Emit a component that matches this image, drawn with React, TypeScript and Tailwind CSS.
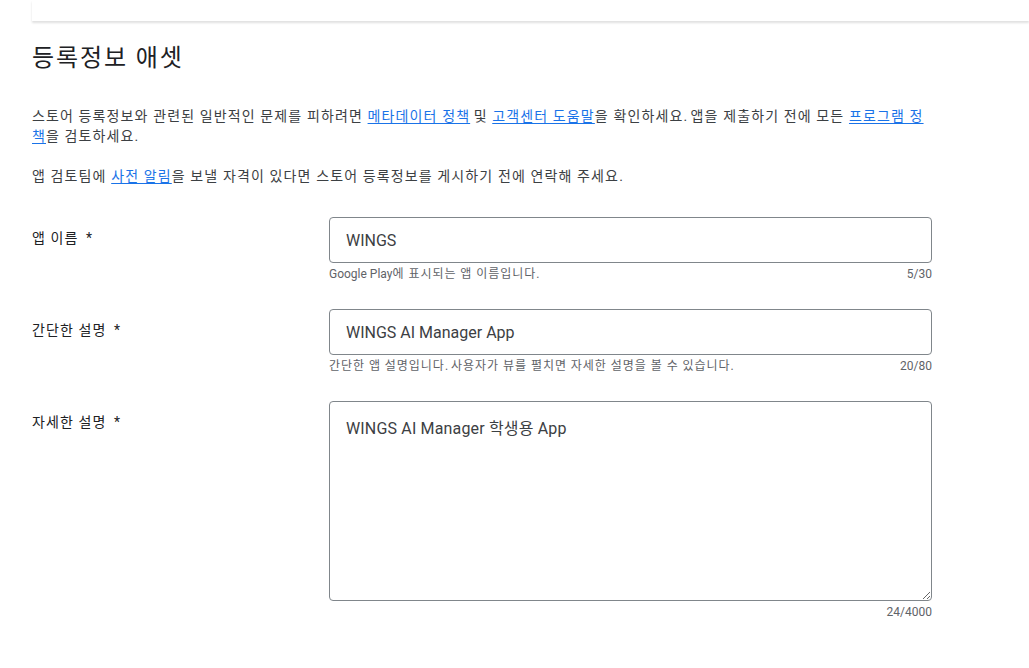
import type { ReactNode } from 'react'

const font = { fontFamily: 'Roboto, "Noto Sans CJK KR", sans-serif' }

// 한글 구간만 자간을 살짝 넓힘 (레퍼런스 폰트가 더 넓음)
function K({ children }: { children: string }) {
  const parts = children.split(/([\uac00-\ud7a3\u3131-\u318e][\uac00-\ud7a3\u3131-\u318e ]*)/)
  return (
    <>
      {parts.map((p, i) =>
        /[\uac00-\ud7a3]/.test(p) ? (
          <span key={i} className="tracking-[0.08em]">{p}</span>
        ) : (
          p
        )
      )}
    </>
  )
}

function Link({ children }: { children: ReactNode }) {
  return (
    <a href="#" className="text-[#1a73e8] underline underline-offset-2">
      {children}
    </a>
  )
}

function Field({ label, value, helper, count, multiline = false }: {
  label: string
  value: string
  helper?: string
  count: string
  multiline?: boolean
}) {
  return (
    <div className="grid grid-cols-[297px_603px] mb-[27px]">
      <div className="pt-[11px] text-sm leading-5 text-[#202124]">
        <K>{label}</K> <span className="ml-1">*</span>
      </div>
      <div>
        {multiline ? (
          <textarea
            defaultValue={value}
            className="block w-full h-[200px] rounded border border-[#80868b] px-4 pt-[15px] text-base leading-6 text-[#3c4043] outline-none tracking-[0.01em]"
            style={font}
          />
        ) : (
          <input
            defaultValue={value}
            className="block w-full h-[46px] rounded border border-[#80868b] px-4 text-base text-[#3c4043] outline-none"
            style={font}
          />
        )}
        <div className="mt-[3px] flex justify-between text-xs leading-4 text-[#5f6368]">
          <span>{helper && <K>{helper}</K>}</span>
          <span>{count}</span>
        </div>
      </div>
    </div>
  )
}

export default function App() {
  return (
    <div className="min-h-screen bg-white" style={font}>
      <div className="ml-8 h-[21px] bg-white shadow-[0_2px_2px_rgba(0,0,0,0.12)]" />
      <div className="pl-8 w-[932px]">
        <h1 className="mt-[21px] text-2xl leading-8 font-normal text-[#202124]">
          <K>등록정보 애셋</K>
        </h1>

        <p className="mt-8 text-sm leading-5 text-[#3c4043]">
          <K>스토어 등록정보와 관련된 일반적인 문제를 피하려면 </K>
          <Link><K>메타데이터 정책</K></Link> <K>및 </K>
          <Link><K>고객센터 도움말</K></Link>
          <K>을 확인하세요. 앱을 제출하기 전에 모든 </K>
          <Link><K>프로그램 정책</K></Link>
          <K>을 검토하세요.</K>
        </p>

        <p className="mt-5 text-sm leading-5 text-[#3c4043]">
          <K>앱 검토팀에 </K>
          <Link><K>사전 알림</K></Link>
          <K>을 보낼 자격이 있다면 스토어 등록정보를 게시하기 전에 연락해 주세요.</K>
        </p>

        <div className="mt-[31px]">
          <Field label="앱 이름" value="WINGS" helper="Google Play에 표시되는 앱 이름입니다." count="5/30" />
          <Field
            label="간단한 설명"
            value="WINGS AI Manager App"
            helper="간단한 앱 설명입니다. 사용자가 뷰를 펼치면 자세한 설명을 볼 수 있습니다."
            count="20/80"
          />
          <Field label="자세한 설명" value="WINGS AI Manager 학생용 App" count="24/4000" multiline />
        </div>
      </div>
    </div>
  )
}
